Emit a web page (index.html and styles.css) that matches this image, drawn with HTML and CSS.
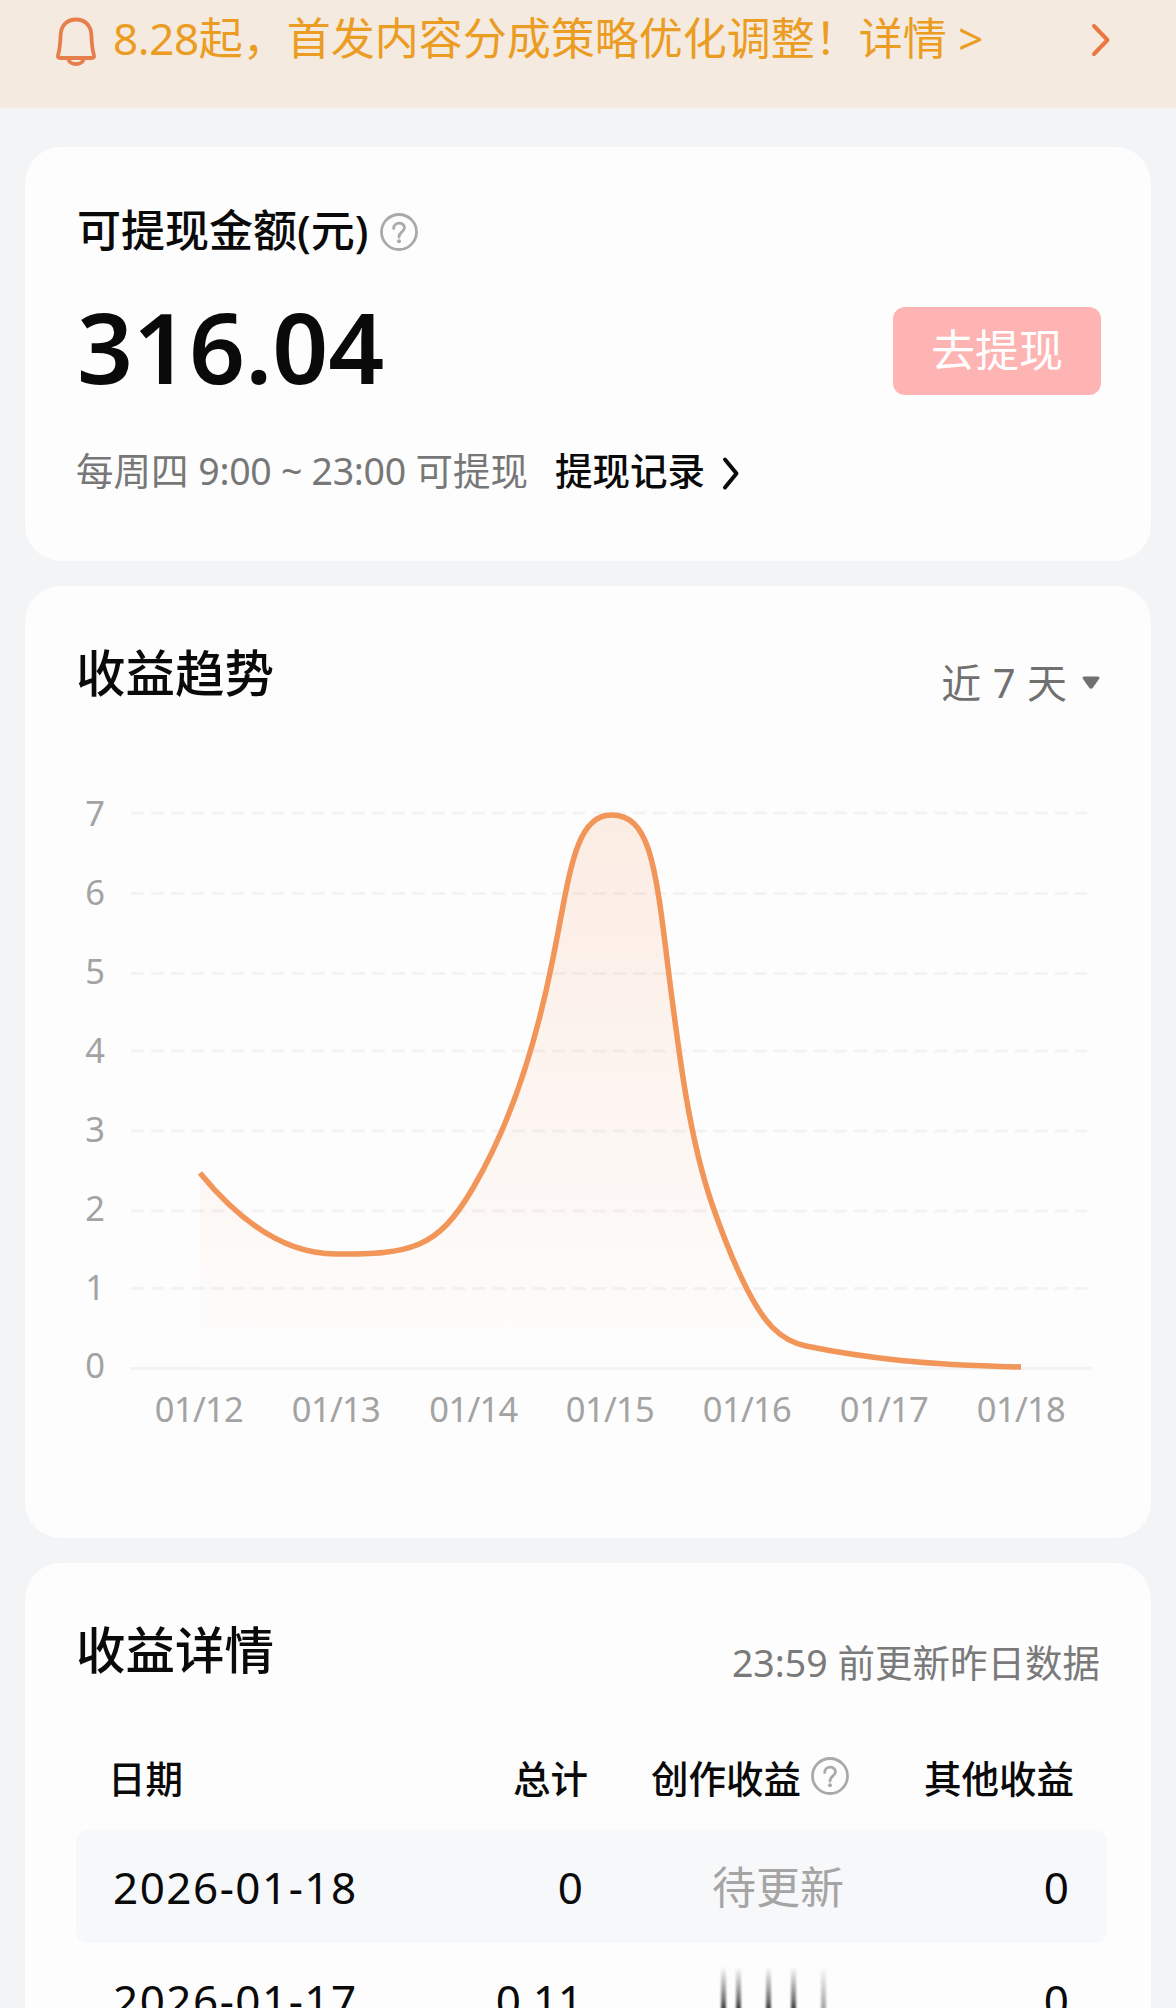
FILE: index.html
```html
<!DOCTYPE html>
<html lang="zh-CN">
<head>
<meta charset="utf-8">
<title>收益</title>
<link rel="stylesheet" href="styles.css">
</head>
<body>
<div class="page">
  <header class="notice">
    <svg class="bell" width="44" height="52" viewBox="0 0 44 52" fill="none">
      <path d="M22 4.5C12.5 4.5 7 11 6.6 20C6.3 29 5.8 34 4 40.5Q3.500 43 6 43H38Q40.500 43 40 40.500C38.200 34 37.700 29 37.400 20C37 11 31.500 4.500 22 4.500Z"/>
      <path d="M14.500 44.500C16.500 50.500 27.500 50.500 29.500 44.500"/>
    </svg>
    <p class="notice-text"><span class="ver">8.28</span>起，首发内容分成策略优化调整！详情 &gt;</p>
    <svg class="notice-arrow" width="22" height="36" viewBox="0 0 22 36" fill="none"><path d="M4 4L17.500 18L4 32"/></svg>
  </header>

  <main class="cards">
    <section class="card balance">
      <div class="balance-title">可提现金额(元)
        <svg class="help" width="40" height="40" viewBox="0 0 40 40" fill="none"><circle cx="20" cy="20" r="17.500"/><path d="M14.700 16.500C14.700 9.500 25.500 9.500 25.500 15.800C25.500 20 20 20 20 25"/><circle class="dot" cx="20" cy="29.300" r="2"/></svg>
      </div>
      <div class="balance-row">
        <strong class="amount">316.04</strong>
        <button class="withdraw">去提现</button>
      </div>
      <div class="balance-foot">
        <span class="hours">每周四 <span class="time">9:00 ~ 23:00</span> 可提现</span>
        <a class="records">提现记录</a>
        <svg width="20" height="36" viewBox="0 0 20 36" fill="none"><path d="M4 4.500L15.500 18.500L4 32.500"/></svg>
      </div>
    </section>

    <section class="card trend">
      <div class="card-head">
        <h2>收益趋势</h2>
        <div class="range">近 7 天
          <svg width="20" height="16" viewBox="0 0 20 16"><path d="M3.500 1.500H16.500Q19.500 1.500 18 4L12 12.500Q10 15 8 12.500L2 4Q.5 1.500 3.500 1.500Z"/></svg>
        </div>
      </div>
      <svg class="chart" width="1126" height="831" viewBox="25 707 1126 831">
        <defs>
          <linearGradient id="area" x1="0" y1="815" x2="0" y2="1368" gradientUnits="userSpaceOnUse">
            <stop offset="0" stop-color="#f4935a" stop-opacity=".16"/>
            <stop offset="1" stop-color="#f4935a" stop-opacity="0"/>
          </linearGradient>
        </defs>
        <g class="grid">
          <path d="M131 813H1087M131 893.500H1087M131 973.500H1087M131 1051H1087M131 1131H1087M131 1211H1087M131 1288.500H1087"/>
        </g>
        <path class="axis" d="M130 1368.500H1092"/>
        <path fill="url(#area)" d="M200 1173C245 1228 290 1254 336 1254C410 1254 437 1250 473 1188C513 1120 537 1038 552 963C569 882 573 815 611 815C649 815 655 860 668 967C680 1063 690 1140 712 1204C722 1233 735 1266 748 1291C763 1320 778 1340 806 1346C835 1352 868 1357 901 1360.500C935 1364 980 1366 1021 1367V1368H200Z"/>
        <path class="line" d="M200 1173C245 1228 290 1254 336 1254C410 1254 437 1250 473 1188C513 1120 537 1038 552 963C569 882 573 815 611 815C649 815 655 860 668 967C680 1063 690 1140 712 1204C722 1233 735 1266 748 1291C763 1320 778 1340 806 1346C835 1352 868 1357 901 1360.500C935 1364 980 1366 1021 1367"/>
        <g class="y-labels">
          <text x="105" y="826">7</text>
          <text x="105" y="905">6</text>
          <text x="105" y="984">5</text>
          <text x="105" y="1063">4</text>
          <text x="105" y="1142">3</text>
          <text x="105" y="1221">2</text>
          <text x="105" y="1300">1</text>
          <text x="105" y="1378">0</text>
        </g>
        <g class="x-labels">
          <text x="199" y="1422">01/12</text>
          <text x="336" y="1422">01/13</text>
          <text x="473.500" y="1422">01/14</text>
          <text x="610" y="1422">01/15</text>
          <text x="747" y="1422">01/16</text>
          <text x="884" y="1422">01/17</text>
          <text x="1021" y="1422">01/18</text>
        </g>
      </svg>
    </section>

    <section class="card detail">
      <div class="card-head">
        <h2>收益详情</h2>
        <div class="update">23:59 前更新昨日数据</div>
      </div>
      <div class="table">
        <div class="tr th">
          <span>日期</span>
          <span>总计</span>
          <span class="with-help">创作收益
            <svg class="help" width="40" height="40" viewBox="0 0 40 40" fill="none"><circle cx="20" cy="20" r="17.500"/><path d="M14.700 16.500C14.700 9.500 25.500 9.500 25.500 15.800C25.500 20 20 20 20 25"/><circle class="dot" cx="20" cy="29.300" r="2"/></svg>
          </span>
          <span>其他收益</span>
        </div>
        <div class="tr td shaded">
          <span class="date">2026-01-18</span>
          <span>0</span>
          <span class="pending">待更新</span>
          <span>0</span>
        </div>
        <div class="tr td">
          <span class="date">2026-01-17</span>
          <span>0.11</span>
          <span class="streaks"><i></i><i></i><i></i><i></i><i class="faint"></i></span>
          <span>0</span>
        </div>
      </div>
    </section>
  </main>
</div>
</body>
</html>
```
FILE: styles.css
```css
* { box-sizing: border-box; margin: 0; padding: 0; }

body {
  background: #f2f4f6;
  color: #0a0a0a;
  font-family: "Noto Sans", "Noto Sans CJK SC", sans-serif;
}

.page { width: 1176px; height: 2008px; overflow: hidden; }

.notice {
  height: 108px;
  padding: 0 64px 0 54px;
  display: flex;
  align-items: flex-start;
  background: #f5eadf;
  color: #eb9c22;
}
.bell { margin-top: 15px; stroke: #e67f4b; stroke-width: 3.8; stroke-linejoin: round; flex: none; }
.notice-text { margin-left: 15px; margin-top: 8px; font-size: 44px; line-height: 60px; white-space: nowrap; flex: 1; }
.ver { letter-spacing: -.4px; }
.notice-arrow { margin-top: 22px; stroke: #ec7740; stroke-width: 4; stroke-linecap: round; stroke-linejoin: round; }

.cards { padding: 39px 25px 0; display: flex; flex-direction: column; gap: 25px; }
.card { background: #fdfdfd; border-radius: 36px; flex: none; }

.help { stroke: #a9a9a9; stroke-width: 2.8; stroke-linecap: round; flex: none; }
.help .dot { fill: #a9a9a9; stroke: none; }

.balance { height: 414px; padding: 53px 50px 0 52px; }
.balance-title { display: flex; align-items: center; gap: 11px; font-size: 44px; font-weight: 500; line-height: 60px; }
.balance-title .help { margin-top: 4px; }
.balance-row { margin-top: 47px; display: flex; justify-content: space-between; align-items: center; height: 88px; }
.amount { font-size: 98px; font-weight: 600; line-height: 88px; padding-bottom: 10px; }
.withdraw {
  width: 208px; height: 88px; padding-bottom: 6px;
  border: 0; border-radius: 12px;
  background: #feb4b2; color: #fff;
  font: inherit; font-size: 44px;
}
.balance-foot { margin-top: 51px; display: flex; align-items: center; height: 50px; font-size: 37.5px; line-height: 50px; }
.hours { color: #777; width: 479px; margin-left: -1px; white-space: nowrap; }
.time { letter-spacing: -.3px; }
.records { font-weight: 500; margin-right: 16px; }
.balance-foot svg { stroke: #0a0a0a; stroke-width: 4; stroke-linecap: round; stroke-linejoin: round; margin-top: 4px; }

.card-head { display: flex; justify-content: space-between; height: 70px; padding: 0 50px 0 51px; }
h2 { font-size: 49.5px; font-weight: 500; line-height: 72px; }

.trend { height: 952px; padding-top: 51px; overflow: hidden; }
.range { display: flex; align-items: center; gap: 14px; padding-top: 22px; font-size: 40px; color: #707070; line-height: 48px; word-spacing: 1px; white-space: nowrap; }
.range svg { fill: #707070; }
.chart { display: block; }
.grid path { fill: none; stroke: #f3f3f3; stroke-width: 3; stroke-dasharray: 13 7.080; }
.axis { stroke: #f2f3f4; stroke-width: 3; }
.line { fill: none; stroke: #f19559; stroke-width: 5.5; stroke-linejoin: round; }
.y-labels, .x-labels { font-size: 34.5px; fill: #a3a3a3; }
.y-labels { text-anchor: end; }
.x-labels { text-anchor: middle; letter-spacing: -.7px; }

.detail { height: 520px; padding-top: 51px; }
.update { padding-top: 25px; padding-right: 1px; font-size: 37.5px; line-height: 48px; color: #7a7a7a; }
.table { margin: 40px 44px 0 51px; }
.tr { display: grid; grid-template-columns: 270px 210px 261px 225px; padding-left: 32px; align-items: center; }
.tr > span { text-align: right; white-space: nowrap; }
.tr > span:first-child { text-align: left; }
.th { height: 106px; padding-bottom: 2px; font-size: 37.5px; font-weight: 500; }
.th > span:last-child { padding-right: 0; }
.with-help { display: flex; align-items: center; justify-content: flex-end; gap: 9px; }
.with-help .help { margin-right: -1px; }
.td { height: 113px; font-size: 44px; line-height: 112px; }
.td > span { padding-right: 5px; }
.td .date { padding-left: 5px; letter-spacing: 1.5px; }
.shaded { background: #f7f8fa; border-radius: 12px; }
.pending { color: #a5a5a5; }
.td > .streaks { display: flex; justify-content: flex-end; align-items: flex-start; padding: 0 23px 0 0; height: 65px; }
.streaks i { width: 5px; height: 65px; margin-left: 23px; background: linear-gradient(#fdfdfd, #777 50%, #111 75%); filter: blur(1px); }
.streaks i:nth-child(2) { margin-left: 10px; }
.streaks i:nth-child(3) { margin-left: 25px; }
.streaks i:nth-child(4) { margin-left: 20px; }
.streaks .faint { margin-left: 25px; background: linear-gradient(#fdfdfd, #aaa 60%, #777); }
```
